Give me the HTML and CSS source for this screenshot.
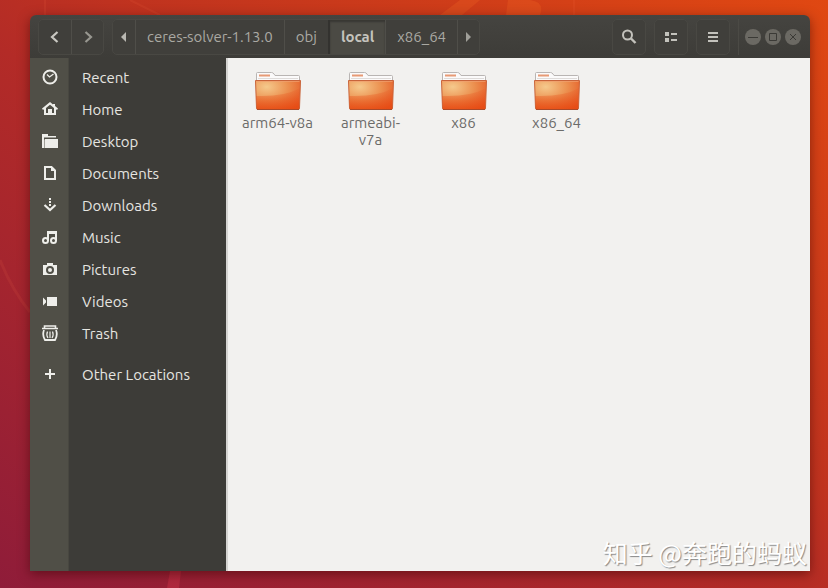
FILE: index.html
```html
<!DOCTYPE html>
<html lang="en">
<head>
<meta charset="utf-8">
<title>local</title>
<link rel="stylesheet" href="styles.css">
</head>
<body>
<svg class="wallpaper" viewBox="0 0 828 588" preserveAspectRatio="none" aria-hidden="true">
  <g fill="none" stroke="#ff7a4a">
    <path d="M0 260Q12 290 30 312" stroke-width="3" opacity=".1"/>
    <path d="M45 0V15M130 0L160 15M574 0V15" stroke-width="2" opacity=".1"/>
  </g>
  <path d="M460 0H480L462 15H440ZM508 0H530Q545 2 540 15H506Z" fill="#ff7a2a" opacity=".2"/>
  <path d="M170 571H181L179 588H167Z" fill="#e83a50" opacity=".3"/>
</svg>
<svg class="defs" aria-hidden="true">
  <defs>
    <radialGradient id="front" cx=".25" cy=".22" r=".95">
      <stop offset="0" stop-color="#f5c98c"/>
      <stop offset=".5" stop-color="#ec9150"/>
      <stop offset="1" stop-color="#e4521f"/>
    </radialGradient>
    <linearGradient id="shade" x2="0" y2="1">
      <stop offset="0" stop-color="#e9501d" stop-opacity=".1"/>
      <stop offset="1" stop-color="#e84a10" stop-opacity=".7"/>
    </linearGradient>
    <symbol id="folder" viewBox="0 0 48 40">
      <path d="M2.500 12V2.500Q2.500 1.500 3.500 1.500H17.500Q19 1.500 20 3L21 4.500H44.500Q45.500 4.500 45.500 5.500V12Z" fill="#fbfafa" stroke="#b9b5b3"/>
      <path d="M5 4.500H16" stroke="#e79a75" stroke-width="2"/>
      <path d="M4 7.500H44" stroke="#dedbd9"/>
      <path d="M1.500 9.500H46.500L45.500 37Q45.500 38.500 44 38.500H4Q2.500 38.500 2.500 37Z" fill="url(#front)" stroke="#c9643a"/>
      <path d="M2 25Q30 26 46 17L45 38H3Z" fill="url(#shade)"/>
      <path d="M2.500 10.500H45.500" stroke="#f0a070" opacity=".7"/>
      <path d="M3 38.500H45" stroke="#a84a2a"/>
    </symbol>
  </defs>
</svg>
<main class="window">
  <header class="bar">
    <div class="group">
      <button class="nav" aria-label="Back"><svg width="16" height="16"><path d="M10.500 3L5 8L10.500 13" fill="none" stroke="#c9c8c2" stroke-width="2.200"/></svg></button>
      <button class="nav" aria-label="Forward"><svg width="16" height="16"><path d="M5.500 3L11 8L5.500 13" fill="none" stroke="#989790" stroke-width="2.200"/></svg></button>
    </div>
    <nav class="group path" aria-label="Path">
      <button class="arrow" aria-label="Scroll left"><svg width="8" height="10"><path d="M6 0V10L1 5Z" fill="#b9b8b2"/></svg></button>
      <button class="crumb">ceres-solver-1.13.0</button>
      <button class="crumb">obj</button>
      <button class="crumb current">local</button>
      <button class="crumb">x86_64</button>
      <button class="arrow" aria-label="Scroll right"><svg width="8" height="10"><path d="M1 0V10L6 5Z" fill="#a09f99"/></svg></button>
    </nav>
    <div class="tools">
      <button class="tool" aria-label="Search"><svg width="16" height="16"><g fill="none" stroke="#c3c2bc"><circle cx="6.500" cy="6" r="4.500" stroke-width="2"/><path d="M10 9.500L14.500 14" stroke-width="2.400"/></g></svg></button>
      <button class="tool" aria-label="View as list"><svg width="16" height="16"><path d="M2 3H6V7H2ZM8 4H14V6H8ZM2 9H6V13H2ZM8 10H14V12H8Z" fill="#c3c2bc"/></svg></button>
      <button class="tool" aria-label="Menu"><svg width="16" height="16"><path d="M3 3H13V5H3ZM3 7H13V9H3ZM3 11H13V13H3Z" fill="#c3c2bc"/></svg></button>
    </div>
    <div class="controls">
      <button aria-label="Minimize"><svg width="16" height="16"><circle cx="8" cy="8" r="8" fill="#6b6963"/><path d="M3 8.500H13" stroke="#3b3a36"/></svg></button>
      <button aria-label="Maximize"><svg width="16" height="16"><circle cx="8" cy="8" r="8" fill="#6b6963"/><path d="M4.500 4.500H11.500V11.500H4.500Z" fill="none" stroke="#3b3a36"/></svg></button>
      <button aria-label="Close"><svg width="16" height="16"><circle cx="8" cy="8" r="8" fill="#6b6963"/><path d="M5 5L11 11M11 5L5 11" stroke="#3b3a36"/></svg></button>
    </div>
  </header>
  <div class="body">
    <nav class="sidebar" aria-label="Places">
      <a href="#recent"><svg width="16" height="16"><g fill="none" stroke="#eeeeea"><circle cx="8" cy="8" r="6.500" stroke-width="2"/><path d="M5 5.500L7.500 8L11.500 5" stroke-width="1.300"/></g></svg><span>Recent</span></a>
      <a href="#home"><svg width="16" height="16"><path d="M8 1L0 7.500L1 9L2 8.200V14H14V8.200L15 9L16 7.500L13 5V3H11V3.500ZM8 3.800L12 7V12H10V8H6V12H4V7Z" fill="#eeeeea" fill-rule="evenodd"/></svg><span>Home</span></a>
      <a href="#desktop"><svg width="16" height="16"><path d="M0 1H6V3H14V4.500H2V15H0Z" fill="#eeeeea"/><path d="M3 6H16V15H2.500V7Z" fill="#eeeeea"/></svg><span>Desktop</span></a>
      <a href="#documents"><svg width="16" height="16"><path d="M3 2H9.500L13 5.500V14H3Z" fill="none" stroke="#eeeeea" stroke-width="2"/><path d="M9 2V6H13Z" fill="#eeeeea"/></svg><span>Documents</span></a>
      <a href="#downloads"><svg width="16" height="16"><path d="M7 1H9V3H7ZM7 4H9V6H7ZM7 7H9V9H7Z" fill="#eeeeea"/><path d="M2.500 8L8 13L13.500 8" fill="none" stroke="#eeeeea" stroke-width="2.200"/></svg><span>Downloads</span></a>
      <a href="#music"><svg width="16" height="16"><g fill="none" stroke="#eeeeea" stroke-width="2"><circle cx="3.500" cy="11.500" r="2.500"/><circle cx="11.500" cy="11.500" r="2.500"/><path d="M6 12V3H14V12"/></g><path d="M5 2H15V5H5Z" fill="#eeeeea"/></svg><span>Music</span></a>
      <a href="#pictures"><svg width="16" height="16"><path d="M1 4H5V2H11V4H15V14H1ZM8 5A4 4 0 1 0 8 13A4 4 0 1 0 8 5Z" fill="#eeeeea" fill-rule="evenodd"/><circle cx="8" cy="9" r="2" fill="#eeeeea"/></svg><span>Pictures</span></a>
      <a href="#videos"><svg width="16" height="16"><path d="M5 4H15V13H5ZM1 4.500L4 7.500V9.500L1 12.500Z" fill="#eeeeea"/></svg><span>Videos</span></a>
      <a href="#trash"><svg width="16" height="16"><g fill="none" stroke="#eeeeea"><path d="M2.500 3V1H13.500V3M0 3.500H16" stroke-width="1.600"/><path d="M2 5Q0 10 3 15H13Q16 10 14 5" stroke-width="1.800"/><path d="M5.500 6.500Q4 10 6 13M8 6.500V13M10.500 6.500Q12 10 10 13" stroke-width="1.200"/></g></svg><span>Trash</span></a>
      <a class="other" href="#other"><svg width="16" height="16"><path d="M7 3H9V7H13V9H9V13H7V9H3V7H7Z" fill="#eeeeea"/></svg><span>Other Locations</span></a>
    </nav>
    <section class="files" aria-label="Files">
      <a href="#arm64"><svg width="48" height="40"><use href="#folder"/></svg><span>arm64-v8a</span></a>
      <a href="#armeabi"><svg width="48" height="40"><use href="#folder"/></svg><span>armeabi-<br>v7a</span></a>
      <a href="#x86"><svg width="48" height="40"><use href="#folder"/></svg><span>x86</span></a>
      <a href="#x86_64"><svg width="48" height="40"><use href="#folder"/></svg><span>x86_64</span></a>
    </section>
  </div>
  <div class="watermark" lang="zh">知乎 @奔跑的蚂蚁</div>
</main>
</body>
</html>
```
FILE: styles.css
```css
* { box-sizing: border-box; }

body {
  margin: 0;
  min-height: 100vh;
  padding: 15px 18px 17px 30px;
  display: flex;
  background: linear-gradient(to top right, #8f1c39 0%, #b32b27 46%, #c0331f 58%, #e04812 100%);
  font-family: Ubuntu, "Noto Sans", sans-serif;
  font-size: 15px;
}

.wallpaper {
  position: absolute;
  inset: 0;
  width: 100%;
  height: 100%;
}

.defs { position: absolute; width: 0; height: 0; }

button {
  margin: 0;
  padding: 0;
  border: 0;
  background: none;
  color: #aaa9a3;
  font: inherit;
  display: flex;
  align-items: center;
  justify-content: center;
}

a { color: inherit; text-decoration: none; }

.window {
  position: relative;
  flex: 1;
  min-width: 0;
  display: flex;
  flex-direction: column;
  border-radius: 6px 6px 0 0;
  box-shadow: 0 3px 12px rgba(50, 0, 0, .5);
}

.bar {
  height: 43px;
  padding: 0 9px 0 8px;
  display: flex;
  align-items: center;
  border-radius: 6px 6px 0 0;
  background: linear-gradient(#454440, #3d3c38);
}

.group,
.tool {
  height: 36px;
  border: 1px solid #494843;
  border-radius: 5px;
  background: #403f3b;
}

.group { display: flex; overflow: hidden; }
.group button + button { border-left: 1px solid #4f4e49; }
.nav { width: 32px; }
.path { margin-left: 8px; }
.arrow { width: 22px; }
.crumb { padding: 0 11px; }

.path .current {
  background: #4b4a44;
  border-left: 2px solid #33322f;
  box-shadow: inset 0 2px 2px #383733;
  color: #c5c4be;
  font-weight: bold;
}

.tools { margin-left: auto; display: flex; gap: 8px; }
.tool { width: 34px; }

.controls {
  height: 36px;
  margin-left: 8px;
  padding-left: 6px;
  display: flex;
  align-items: center;
  gap: 4px;
  border-left: 1px solid #4b4a45;
}

.body { flex: 1; display: flex; }

.sidebar {
  width: 196px;
  padding-top: 3px;
  background: linear-gradient(to right, #504f47 38px, #484740 38px, #484740 39px, #3d3c38 39px);
  color: #e6e5e1;
}

.sidebar a {
  height: 32px;
  padding-left: 12px;
  display: flex;
  align-items: center;
  gap: 24px;
}

.sidebar .other { margin-top: 9px; }

.files {
  flex: 1;
  padding: 13px 3px;
  display: grid;
  grid-template-columns: repeat(auto-fill, 93px);
  align-content: start;
  background: #f2f1ef;
  border-left: 2px solid #d5d4d1;
  color: #6c6b69;
}

.files a {
  display: flex;
  flex-direction: column;
  align-items: center;
  gap: 3px;
  line-height: 17px;
  text-align: center;
}

.watermark {
  position: absolute;
  right: 3px;
  bottom: 1px;
  color: #fff;
  font-family: "Noto Sans CJK SC", sans-serif;
  font-size: 25px;
  line-height: 36px;
  text-shadow: 1px 1px 1px #888;
}
```
